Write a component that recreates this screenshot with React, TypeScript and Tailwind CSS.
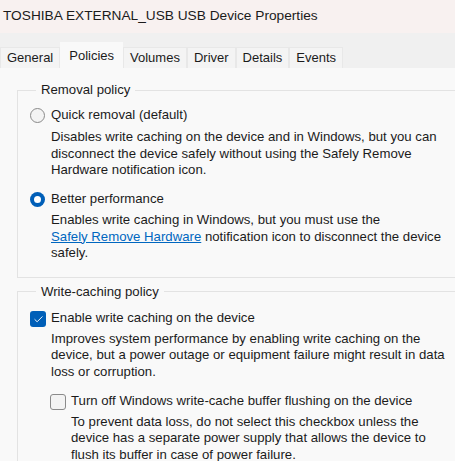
import { Check } from "lucide-react";

const tabs = ["General", "Policies", "Volumes", "Driver", "Details", "Events"];

const Radio = ({ on }: { on?: boolean }) =>
  on ? (
    <span className="mt-[1px] flex h-[15px] w-[15px] shrink-0 items-center justify-center rounded-full bg-[#005fb8]">
      <span className="h-[7px] w-[7px] rounded-full bg-white" />
    </span>
  ) : (
    <span className="mt-[1px] h-[15px] w-[15px] shrink-0 rounded-full border border-[#8a8a8a] bg-[#f3f3f3]" />
  );

const Box = ({ on }: { on?: boolean }) =>
  on ? (
    <span className="mt-[1px] flex h-[16px] w-[16px] shrink-0 items-center justify-center rounded-[3px] bg-[#005fb8]">
      <Check size={11} strokeWidth={2} className="text-white" />
    </span>
  ) : (
    <span className="mt-[1px] h-[16px] w-[16px] shrink-0 rounded-[3px] border border-[#8a8a8a] bg-[#f3f3f3]" />
  );

export default function App() {
  return (
    <div className="h-[461px] w-[455px] overflow-hidden bg-[#f9f9f9] text-[#1b1b1b]" style={{ fontFamily: '"Liberation Sans", Arial, sans-serif' }}>
      <div className="flex h-[33px] items-center bg-[#f8f1f0] pl-[3px] text-[13.7px]">TOSHIBA EXTERNAL_USB USB Device Properties</div>

      <div className="flex h-[35px] items-end bg-[#f0f0f0]">
        {tabs.map((t) =>
          t === "Policies" ? (
            <div key={t} className="flex h-[26px] items-start bg-[#f9f9f9] px-[9px] pt-[4px] text-[13px]">{t}</div>
          ) : (
            <div key={t} className="flex h-[21px] items-center border border-b-0 border-[#e8e8e8] bg-[#f4f4f4] px-[6px] text-[13px]">{t}</div>
          )
        )}
      </div>

      <div className="flex flex-col gap-[6px] pt-[14px] pl-[17px] text-[13.2px] leading-[16.5px]">
        <fieldset className="-mr-4 border border-[#e3e3e3] pb-[15px] pl-[12px]">
          <legend className="ml-[6px] px-[5px]">Removal policy</legend>
          <div className="mt-[8px] flex gap-[6px]">
            <Radio />
            <div>
              <div>Quick removal (default)</div>
              <div className="mt-[6px]">
                Disables write caching on the device and in Windows, but you can<br />
                disconnect the device safely without using the Safely Remove<br />
                Hardware notification icon.
              </div>
            </div>
          </div>
          <div className="mt-[12px] flex gap-[6px]">
            <Radio on />
            <div>
              <div>Better performance</div>
              <div className="mt-[5px]">
                Enables write caching in Windows, but you must use the<br />
                <span className="text-[#0067c0] underline">Safely Remove Hardware</span> notification icon to disconnect the device<br />
                safely.
              </div>
            </div>
          </div>
        </fieldset>

        <fieldset className="-mr-4 border border-[#e3e3e3] pl-[12px]">
          <legend className="ml-[6px] px-[5px]">Write-caching policy</legend>
          <div className="mt-[10px] flex gap-[5px]">
            <Box on />
            <div>
              <div>Enable write caching on the device</div>
              <div className="mt-[4px]">
                Improves system performance by enabling write caching on the<br />
                device, but a power outage or equipment failure might result in data<br />
                loss or corruption.
              </div>
              <div className="mt-[13px] -ml-[1px] flex gap-[5px]">
                <Box />
                <div>
                  <div>Turn off Windows write-cache buffer flushing on the device</div>
                  <div className="mt-[4px]">
                    To prevent data loss, do not select this checkbox unless the<br />
                    device has a separate power supply that allows the device to<br />
                    flush its buffer in case of power failure.
                  </div>
                </div>
              </div>
            </div>
          </div>
        </fieldset>
      </div>
    </div>
  );
}
